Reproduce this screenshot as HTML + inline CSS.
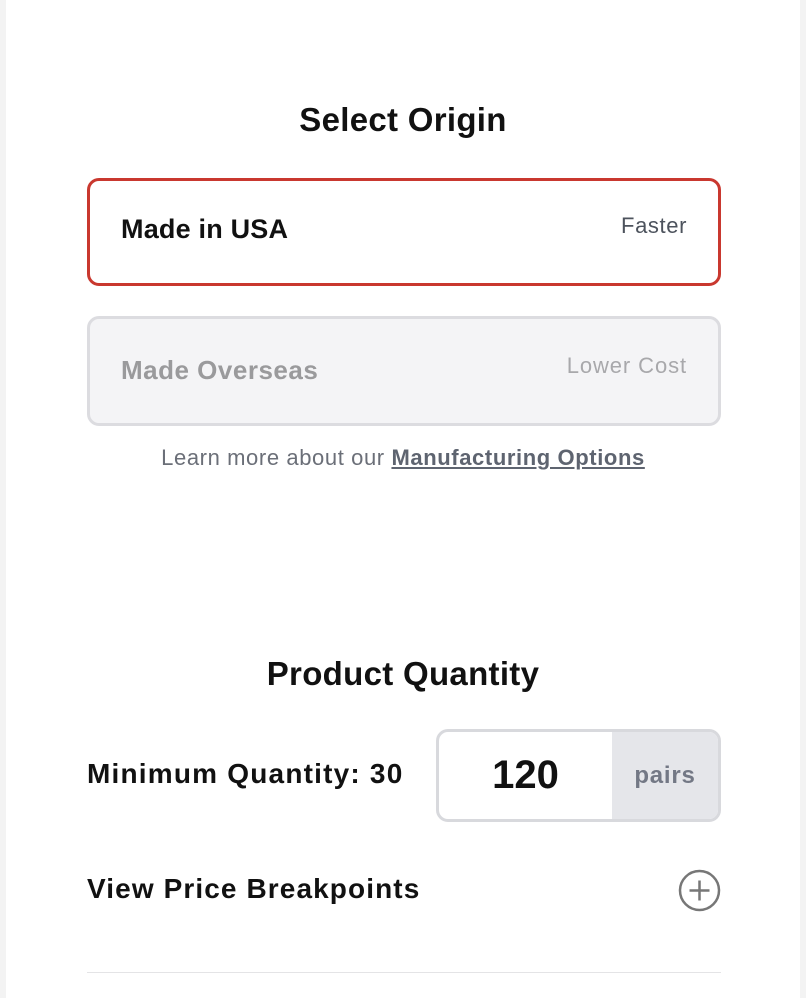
<!DOCTYPE html>
<html><head><style>
*{margin:0;padding:0;box-sizing:border-box}
body{width:806px;height:998px;background:#f3f3f3;font-family:"Liberation Sans",sans-serif;position:relative;overflow:hidden}
.main{position:absolute;left:6px;top:0;width:794px;height:998px;background:#fff}
.a{position:absolute;white-space:nowrap}
h2{position:absolute;left:0;width:806px;text-align:center;font-size:33px;font-weight:bold;color:#111;letter-spacing:0.3px}
.box{position:absolute;left:87px;width:634px;border-radius:12px}
</style></head><body>
<div class="main"></div>
<h2 style="top:101px">Select Origin</h2>
<div class="box" style="top:178px;height:108px;border:3px solid #c9382f;background:#fff"></div>
<div class="a" style="left:121px;top:214px;font-size:27px;font-weight:bold;color:#111;letter-spacing:0.2px">Made in USA</div>
<div class="a" style="right:119px;top:213px;font-size:22px;color:#4d535d;letter-spacing:0.6px">Faster</div>
<div class="box" style="top:316px;height:110px;border:3px solid #dcdce0;background:#f4f4f6"></div>
<div class="a" style="left:121px;top:355px;font-size:26px;font-weight:bold;color:#9a9a9c;letter-spacing:0.5px">Made Overseas</div>
<div class="a" style="right:119px;top:353px;font-size:22px;color:#a8a8ab;letter-spacing:0.9px">Lower Cost</div>
<div class="a" style="left:0;width:806px;text-align:center;top:445px;font-size:22px;color:#6b6f78;letter-spacing:0.6px">Learn more about our <b style="text-decoration:underline;color:#5e6470">Manufacturing Options</b></div>
<h2 style="top:655px">Product Quantity</h2>
<div class="a" style="left:87px;top:758px;font-size:28px;font-weight:bold;color:#111;letter-spacing:1.2px">Minimum Quantity: 30</div>
<div class="a" style="left:436px;top:729px;width:285px;height:93px;border:3px solid #d8d9dd;border-radius:12px;overflow:hidden;background:#fff">
<div class="a" style="left:0;top:0;width:173px;height:87px;text-align:center;line-height:87px;font-size:40px;font-weight:bold;color:#111">120</div>
<div class="a" style="left:173px;top:0;width:106px;height:87px;background:#e5e6ea;text-align:center;line-height:87px;font-size:24px;font-weight:bold;color:#737885;letter-spacing:0.8px">pairs</div>
</div>
<div class="a" style="left:87px;top:873px;font-size:28px;font-weight:bold;color:#111;letter-spacing:1.1px">View Price Breakpoints</div>
<svg class="a" style="left:678px;top:869px" width="43" height="43" viewBox="0 0 43 43"><circle cx="21.5" cy="21.5" r="19.5" fill="none" stroke="#777" stroke-width="2.5"/><path d="M21.5 11.5v20M11.5 21.5h20" stroke="#777" stroke-width="2.5"/></svg>
<div class="a" style="left:87px;top:972px;width:634px;height:1px;background:#e4e4e6"></div>
</body></html>
